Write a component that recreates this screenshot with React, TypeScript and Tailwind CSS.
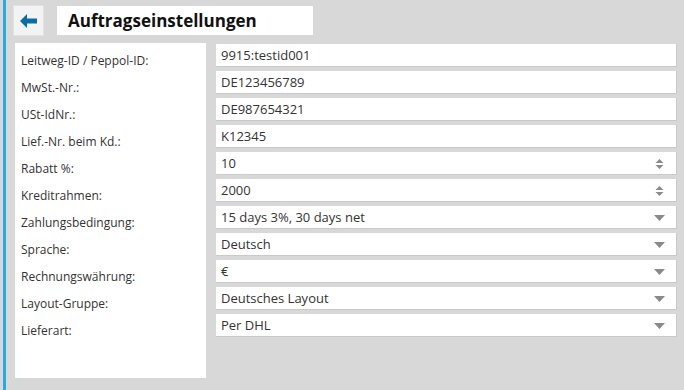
import React from 'react';

type Field = { label: string; value: string; kind: 'text' | 'number' | 'select' };

const fields: Field[] = [
  { label: 'Leitweg-ID / Peppol-ID:', value: '9915:testid001', kind: 'text' },
  { label: 'MwSt.-Nr.:', value: 'DE123456789', kind: 'text' },
  { label: 'USt-IdNr.:', value: 'DE987654321', kind: 'text' },
  { label: 'Lief.-Nr. beim Kd.:', value: 'K12345', kind: 'text' },
  { label: 'Rabatt %:', value: '10', kind: 'number' },
  { label: 'Kreditrahmen:', value: '2000', kind: 'number' },
  { label: 'Zahlungsbedingung:', value: '15 days 3%, 30 days net', kind: 'select' },
  { label: 'Sprache:', value: 'Deutsch', kind: 'select' },
  { label: 'Rechnungswährung:', value: '€', kind: 'select' },
  { label: 'Layout-Gruppe:', value: 'Deutsches Layout', kind: 'select' },
  { label: 'Lieferart:', value: 'Per DHL', kind: 'select' },
];

function Spinner() {
  return (
    <svg width="9" height="12" viewBox="0 0 9 12" className="mr-[12px]">
      <path d="M4.5 1 L8.5 5 L0.5 5 Z" fill="#8a8a8a" />
      <path d="M0.5 7 L8.5 7 L4.5 11 Z" fill="#8a8a8a" />
    </svg>
  );
}

function Caret() {
  return (
    <svg width="11" height="6" viewBox="0 0 11 6" className="mr-[11px]">
      <path d="M0 0 L11 0 L5.5 6 Z" fill="#8a8a8a" />
    </svg>
  );
}

export default function App() {
  return (
    <div
      className="w-[684px] h-[390px] bg-[#d8d8d8] pl-[3px] overflow-hidden"
      style={{ fontFamily: '"Open Sans", "Noto Sans", sans-serif' }}
    >
      <div className="h-full border-l-[3px] border-[#29abe2]">
        {/* Kopfzeile */}
        <div className="flex pt-[5px] pl-[7px]">
          <button className="w-[31px] h-[31px] bg-[#f3f3f3] border border-[#e2e2e2] flex items-center justify-center">
            <svg width="18" height="14" viewBox="0 0 18 14">
              <path d="M0 7 L7 0 L7 4.5 L17 4.5 L17 9.5 L7 9.5 L7 14 Z" fill="#0a6ea3" />
            </svg>
          </button>
          <div className="ml-[13px] mt-[1px] w-[256px] h-[29px] bg-white flex items-center pl-[11px] text-[17px] font-bold text-[#111]">
            Auftragseinstellungen
          </div>
        </div>

        {/* Formular */}
        <div className="flex mt-[7px]">
          <div className="ml-[9px] w-[191px] h-[335px] bg-white pt-[4px] pl-[6px]">
            {fields.map((f) => (
              <div key={f.label} className="h-[27px] flex items-center text-[12px] text-[#333]">
                {f.label}
              </div>
            ))}
          </div>
          <div className="ml-[10px] w-[461px] pt-[1px] flex flex-col gap-[4px]">
            {fields.map((f) => (
              <div
                key={f.label}
                className="h-[23px] bg-white border-b border-r border-[#c9c9c9] flex items-center justify-between pl-[5px] pt-[1px] text-[13px] text-[#333]"
              >
                <span>{f.value}</span>
                {f.kind === 'number' && <Spinner />}
                {f.kind === 'select' && <Caret />}
              </div>
            ))}
          </div>
        </div>
      </div>
    </div>
  );
}
